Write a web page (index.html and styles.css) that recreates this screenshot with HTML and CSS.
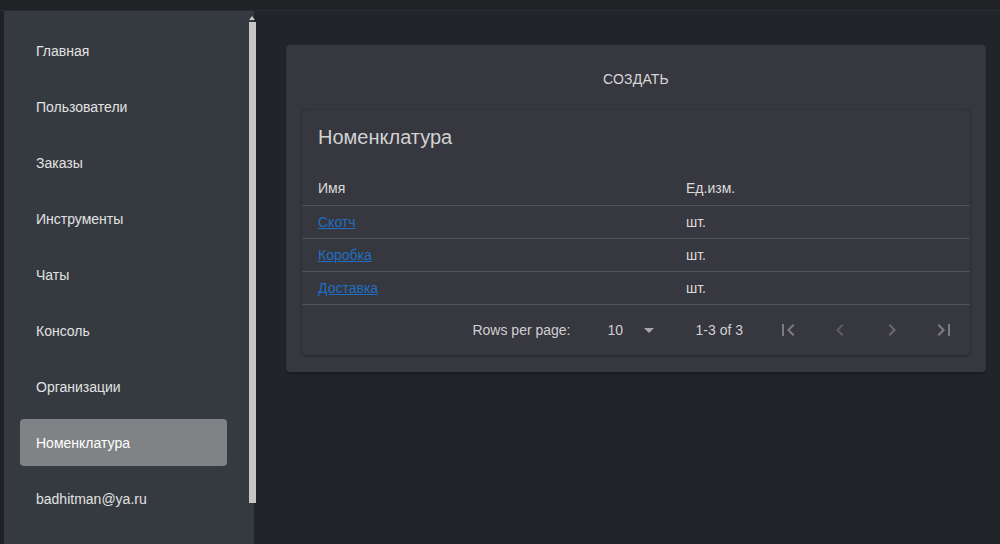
FILE: index.html
```html
<!DOCTYPE html>
<html lang="ru">
<head>
<meta charset="utf-8">
<title>Номенклатура</title>
<link rel="stylesheet" href="styles.css">
</head>
<body>
<div class="topbar"></div>
<div class="layout">
  <div class="leftstrip"></div>
  <nav class="sidebar">
    <ul class="menu">
      <li class="item">Главная</li>
      <li class="item">Пользователи</li>
      <li class="item">Заказы</li>
      <li class="item">Инструменты</li>
      <li class="item">Чаты</li>
      <li class="item">Консоль</li>
      <li class="item">Организации</li>
      <li class="item active">Номенклатура</li>
      <li class="item">badhitman@ya.ru</li>
    </ul>
    <div class="scroll-arrow"></div>
    <div class="scroll-thumb"></div>
  </nav>
  <main class="main">
    <section class="card">
      <div class="actions"><button class="create">Создать</button></div>
      <div class="table-card">
        <h2 class="title">Номенклатура</h2>
        <table class="table">
          <thead>
            <tr><th class="c1">Имя</th><th class="c2">Ед.изм.</th></tr>
          </thead>
          <tbody>
            <tr><td><a href="#">Скотч</a></td><td>шт.</td></tr>
            <tr><td><a href="#">Коробка</a></td><td>шт.</td></tr>
            <tr><td><a href="#">Доставка</a></td><td>шт.</td></tr>
          </tbody>
        </table>
        <div class="pager">
          <span class="rpp">Rows per page:</span>
          <span class="select">10<span class="caret"></span></span>
          <span class="range">1-3 of 3</span>
          <span class="pbtn first"><svg width="24" height="24" viewBox="0 0 24 24"><path d="M18.41 16.59L13.82 12l4.59-4.59L17 6l-6 6 6 6zM6 6h2v12H6z" fill="currentColor"/></svg></span>
          <span class="pbtn prev"><svg width="24" height="24" viewBox="0 0 24 24"><path d="M15.41 7.41L14 6l-6 6 6 6 1.41-1.41L10.83 12z" fill="currentColor"/></svg></span>
          <span class="pbtn next"><svg width="24" height="24" viewBox="0 0 24 24"><path d="M10 6L8.59 7.41 13.17 12l-4.58 4.59L10 18l6-6z" fill="currentColor"/></svg></span>
          <span class="pbtn last"><svg width="24" height="24" viewBox="0 0 24 24"><path d="M5.59 7.41L10.18 12l-4.59 4.59L7 18l6-6-6-6zM16 6h2v12h-2z" fill="currentColor"/></svg></span>
        </div>
      </div>
    </section>
  </main>
</div>
</body>
</html>
```

FILE: styles.css
```css
html, body {
  margin: 0;
  padding: 0;
  height: 100%;
}
body {
  background: #212429;
  font-family: "Liberation Sans", Arial, sans-serif;
  font-size: 14px;
  color: #dcdcdc;
  overflow: hidden;
}
.topbar {
  height: 10px;
  background: #202226;
  border-bottom: 1px solid #2a2c30;
}
.layout {
  display: flex;
  height: 533px;
}
.leftstrip {
  width: 4px;
  background: #1f2124;
}
.sidebar {
  position: relative;
  width: 250px;
  background: #353a40;
  flex: none;
}
.menu {
  list-style: none;
  margin: 0;
  padding: 16px 0 0 16px;
  display: flex;
  flex-direction: column;
  gap: 9px;
}
.item {
  width: 191px;
  height: 47px;
  padding-left: 16px;
  display: flex;
  align-items: center;
  border-radius: 4px;
  color: #e2e2e2;
  font-size: 14px;
}
.item.active {
  background: #808385;
  color: #ffffff;
}
.scroll-arrow {
  position: absolute;
  left: 245px;
  top: 5px;
  width: 0;
  height: 0;
  border-left: 3.5px solid transparent;
  border-right: 3.5px solid transparent;
  border-bottom: 4px solid #c8c8c8;
}
.scroll-thumb {
  position: absolute;
  left: 245px;
  top: 11px;
  width: 7px;
  height: 481px;
  background: #c6c6c6;
}
.main {
  flex: 1;
  padding: 34px 14px 0 32px;
}
.card {
  background: #37373f;
  border-radius: 4px;
  padding: 16px 16px 17px;
  box-shadow: 0 2px 2px rgba(0,0,0,0.25);
}
.actions {
  display: flex;
  justify-content: center;
  margin-bottom: 13px;
}
.create {
  height: 36px;
  padding: 0 16px;
  background: none;
  border: none;
  color: #d6d6d6;
  font-family: "Liberation Sans", Arial, sans-serif;
  font-size: 14px;
  text-transform: uppercase;
  letter-spacing: 0.2px;
}
.table-card {
  background: #37373f;
  border-radius: 4px;
  box-shadow: 0 1px 3px rgba(0,0,0,0.35), 0 0 1px rgba(0,0,0,0.3);
}
.title {
  margin: 0;
  height: 61px;
  padding: 16px 0 0 16px;
  box-sizing: border-box;
  font-size: 20px;
  line-height: 23px;
  font-weight: normal;
  color: #d2d2d2;
}
.table {
  width: 100%;
  border-collapse: collapse;
}
.table th, .table td {
  text-align: left;
  padding: 0 16px;
  border-bottom: 1px solid #515158;
  font-size: 14px;
  font-weight: normal;
}
.table th {
  height: 34px;
  color: #dcdcdc;
}
.table td {
  height: 32px;
  color: #dcdcdc;
}
.c1 { width: 336px; }
.table a {
  color: #1f6fc2;
  text-decoration: underline;
}
.pager {
  height: 50px;
  display: flex;
  align-items: center;
  justify-content: flex-end;
  color: #d0d0d0;
  font-size: 14px;
}
.rpp {
  margin-right: 37px;
}
.select {
  display: flex;
  align-items: center;
  width: 56px;
  margin-right: 32px;
}
.caret {
  margin-left: 21px;
  width: 0;
  height: 0;
  border-left: 5px solid transparent;
  border-right: 5px solid transparent;
  border-top: 5px solid #a8a8a8;
}
.range {
  margin-right: 19px;
}
.pbtn {
  width: 52px;
  height: 40px;
  display: flex;
  align-items: center;
  justify-content: center;
  color: #6a6a6f;
}
.pbtn.first, .pbtn.last { color: #7c7c80; }
.pbtn.prev { color: #5e5e63; }
```
